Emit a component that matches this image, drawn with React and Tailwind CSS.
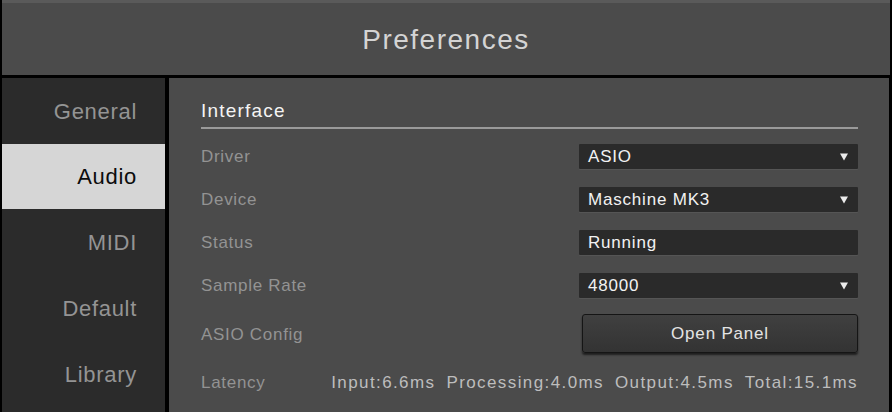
import React from 'react';

const navItems = ['General', 'Audio', 'MIDI', 'Default', 'Library'];

const Arrow = () => (
  <svg width="8" height="8" viewBox="0 0 8 8" className="shrink-0">
    <path d="M0 0.5 H8 L4 7.5 Z" fill="#ececec" />
  </svg>
);

const Field = ({ value, arrow = true }) => (
  <div className="w-[279px] h-[25px] bg-[#2a2a2a] rounded-[1px] flex items-center justify-between pl-[9px] pr-[10px] shadow-[0_1px_0_#555]">
    <span className="text-[17px] tracking-[0.8px] text-[#f2f2f2] leading-none">{value}</span>
    {arrow && <Arrow />}
  </div>
);

const Row = ({ label, children }) => (
  <div className="flex items-center justify-between h-[25px]">
    <span className="text-[17px] tracking-[0.7px] text-[#939393]">{label}</span>
    {children}
  </div>
);

const App = () => {
  return (
    <div
      className="w-[892px] h-[412px] bg-black flex flex-col px-[2px] overflow-hidden"
      style={{ fontFamily: '"Liberation Sans", Arial, sans-serif' }}
    >
      <div className="h-[75px] shrink-0 bg-[#4b4b4b] border-t-[3px] border-[#5a5a5a] flex items-center justify-center">
        <span className="text-[28px] tracking-[1.5px] text-[#d4d4d4] mt-[1px]">Preferences</span>
      </div>

      <div className="flex flex-1 mt-[3px] gap-[4px] min-h-0">
        <div className="w-[163px] shrink-0 bg-[#2b2b2b] flex flex-col">
          {navItems.map((item) => (
            <div
              key={item}
              className={
                item === 'Audio'
                  ? 'h-[65px] shrink-0 flex items-center justify-end pr-[28px] bg-[#d6d6d6] text-[#0c0c0c] text-[22px] tracking-[0.7px]'
                  : 'h-[66px] shrink-0 flex items-center justify-end pr-[28px] text-[#949494] text-[22px] tracking-[0.7px]'
              }
            >
              {item}
            </div>
          ))}
        </div>

        <div className="flex-1 bg-[#4b4b4b] mr-[1px] pl-[32px] pr-[31px] pt-[20px] flex flex-col">
          <div className="border-b-2 border-[#9a9a9a] pb-[3px]">
            <span className="text-[19px] tracking-[1.2px] font-medium text-[#f4f4f4] leading-[26px]">Interface</span>
          </div>

          <div className="flex flex-col gap-[18px] mt-[15px]">
            <Row label="Driver">
              <Field value="ASIO" />
            </Row>
            <Row label="Device">
              <Field value="Maschine MK3" />
            </Row>
            <Row label="Status">
              <Field value="Running" arrow={false} />
            </Row>
            <Row label="Sample Rate">
              <Field value="48000" />
            </Row>
          </div>

          <div className="flex items-center justify-between mt-[16px] h-[39px]">
            <span className="text-[17px] tracking-[0.7px] text-[#939393] mt-[2px]">ASIO Config</span>
            <button className="w-[276px] h-[39px] rounded-[3px] border border-[#151515] bg-gradient-to-b from-[#404040] to-[#333333] shadow-[0_2px_2px_rgba(0,0,0,0.6)] text-[17px] tracking-[0.8px] text-[#e4e4e4]">
              Open Panel
            </button>
          </div>

          <div className="flex items-center justify-between mt-[20px] h-[20px]">
            <span className="text-[17px] tracking-[0.7px] text-[#939393]">Latency</span>
            <div className="flex gap-[11px] text-[17px] tracking-[1.4px] text-[#bdbdbd]">
              <span>Input:6.6ms</span>
              <span>Processing:4.0ms</span>
              <span>Output:4.5ms</span>
              <span>Total:15.1ms</span>
            </div>
          </div>
        </div>
      </div>
    </div>
  );
};

export default App;
